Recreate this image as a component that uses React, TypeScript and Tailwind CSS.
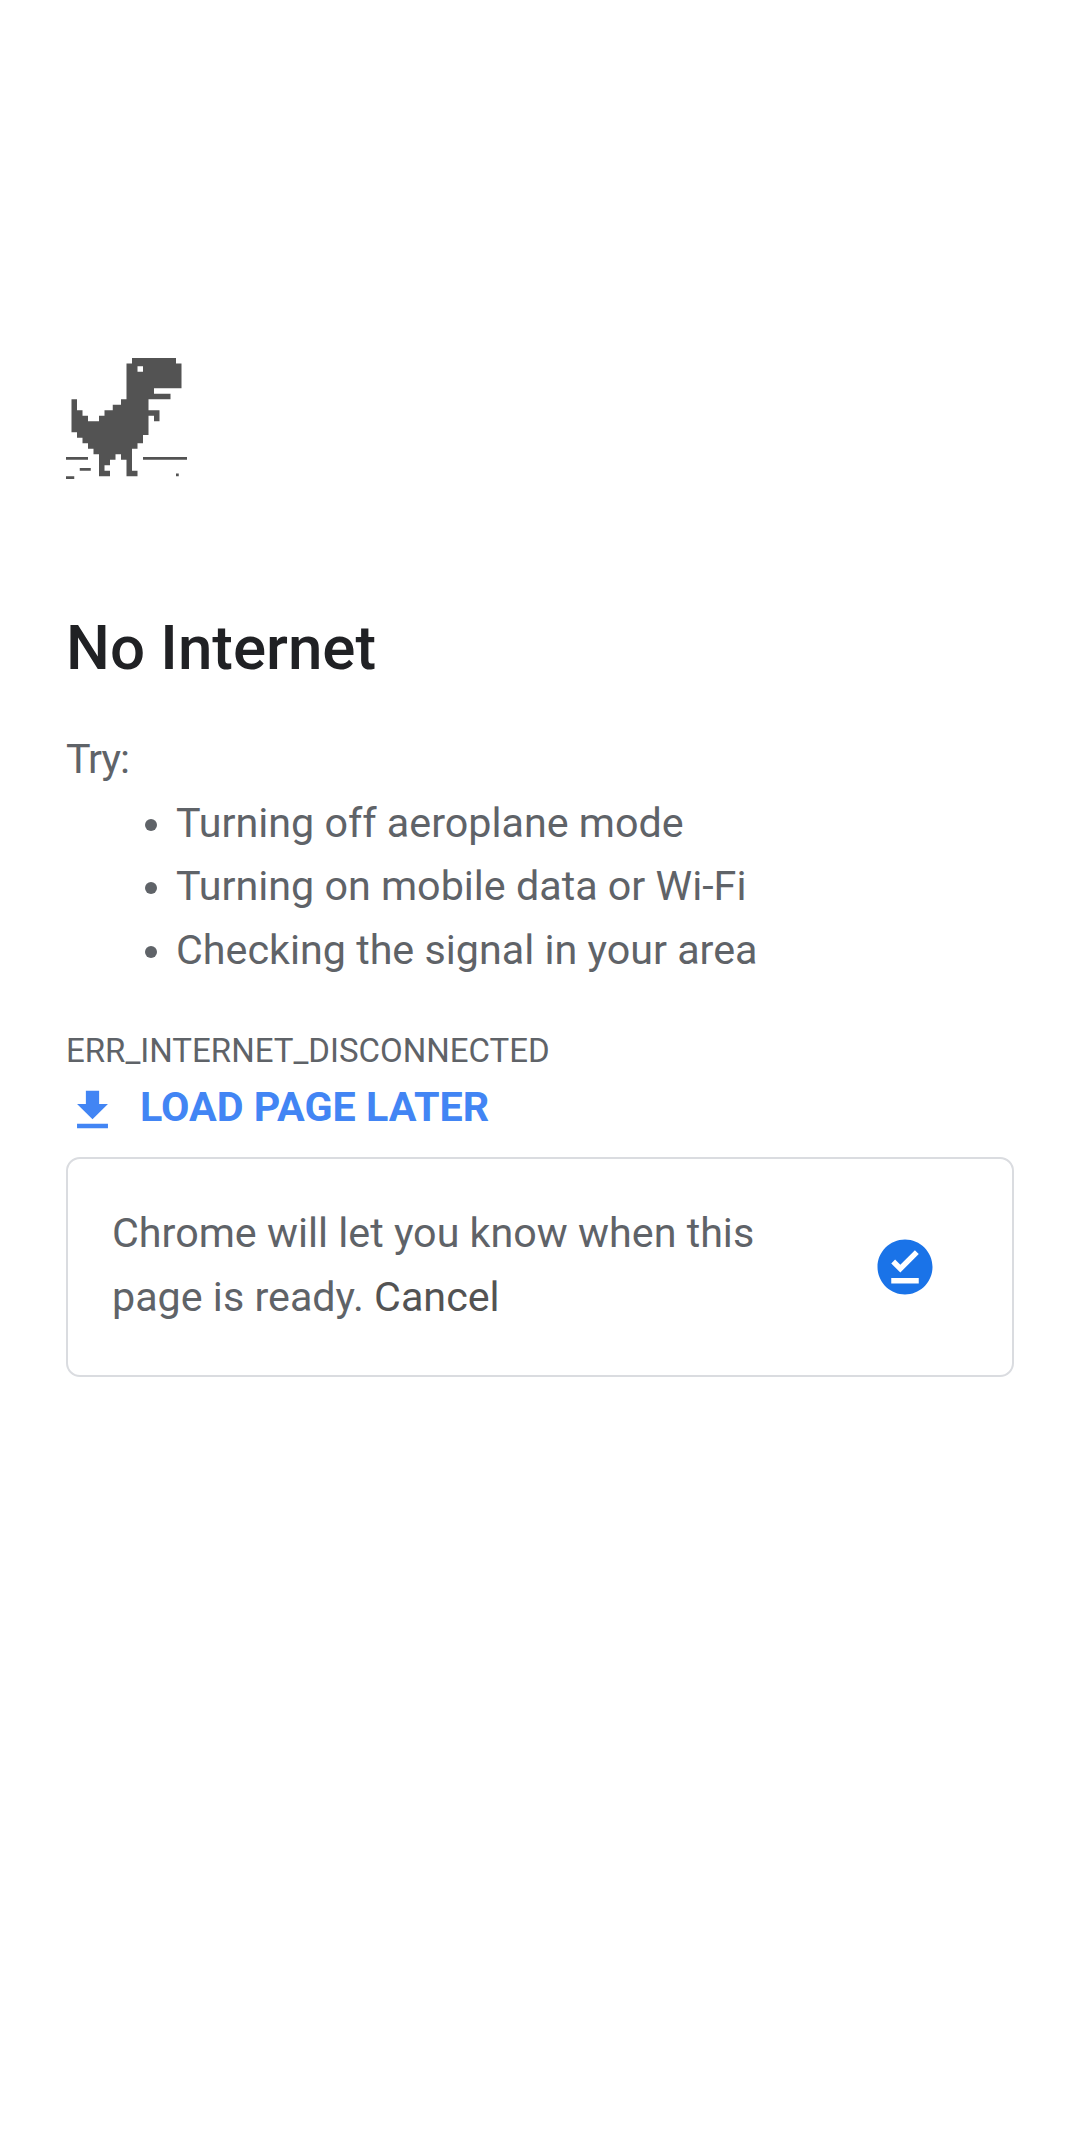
const tips = [
  'Turning off aeroplane mode',
  'Turning on mobile data or Wi-Fi',
  'Checking the signal in your area',
];

function Dino() {
  return (
    <svg className="block h-[122px] w-[121px] fill-[#535353]" viewBox="0 0 22 22.18">
      <path
        fillRule="evenodd"
        d="M12 0H20V1H21V5.5H16V6.5H19V7.5H15V9.5H17V11.5H16V10.5H15V14H14V15.5H13V16.5H12V20.5H13V21.5H11V18.5H10V17.5H9V18.5H8V19.5H7V20.5H8V21.5H6V17.5H5V16.5H4V15.5H3V14.5H2V13.5H1V7.5H2V9.5H3V10.5H4V11.5H6V10.5H7V9.5H8.5V8.5H10V7.5H11V1H12ZM13 1.5V2.5H14V1.5Z"
      />
      <path d="M0 18H4V18.5H0ZM14 18H22V18.5H14ZM2.5 20H4.5V20.5H2.5ZM0 21.5H1.5V22H0ZM20 21H20.5V21.5H20Z" />
    </svg>
  );
}

export default function App() {
  return (
    <main className="min-h-[2130px] bg-white px-[66px] pt-[357.5px] font-['Roboto',sans-serif] text-[41.25px] leading-[63.6px] text-[#5f6368]">
      <Dino />
      <h1 className="mt-[132.5px] text-[61.875px] leading-[72px] font-medium text-[#202124]">No Internet</h1>
      <p className="mt-[44px] tracking-[-1px]">Try:</p>
      <ul>
        {tips.map((tip) => (
          <li key={tip} className="flex items-center pl-[79px]">
            <span className="mt-[3px] mr-[19px] size-[12px] rounded-full bg-[#5f6368]" />
            {tip}
          </li>
        ))}
      </ul>
      <p className="mt-[49px] text-[33px] leading-[40px]">ERR_INTERNET_DISCONNECTED</p>
      <button className="mt-[11px] flex h-[53px] items-start font-bold text-[#4285f4]">
        <svg className="mt-[2px] mr-[21px] size-[53px] fill-current" viewBox="0 0 24 24">
          <path d="M19 9h-4V3H9v6H5l7 7 7-7zM5 18v2h14v-2H5z" />
        </svg>
        <span className="leading-[50px]">LOAD PAGE LATER</span>
      </button>
      <section className="mt-[22px] flex h-[220px] items-center justify-between rounded-[14px] border-2 border-[#dadce0] pr-[74px] pl-[44px]">
        <p className="-mt-[5px] w-[680px] leading-[64px]">
          Chrome will let you know when this page is ready. <a className="text-[#535353]">Cancel</a>
        </p>
        <svg className="size-[66px] fill-[#1a73e8]" viewBox="0 0 24 24">
          <path d="M12 2C6.5 2 2 6.5 2 12s4.5 10 10 10 10-4.5 10-10S17.5 2 12 2zm5 16H7v-2h10v2zm-6.7-4L7 10.7l1.4-1.4 1.9 1.9 5.3-5.3L17 7.3 10.3 14z" />
        </svg>
      </section>
    </main>
  );
}
